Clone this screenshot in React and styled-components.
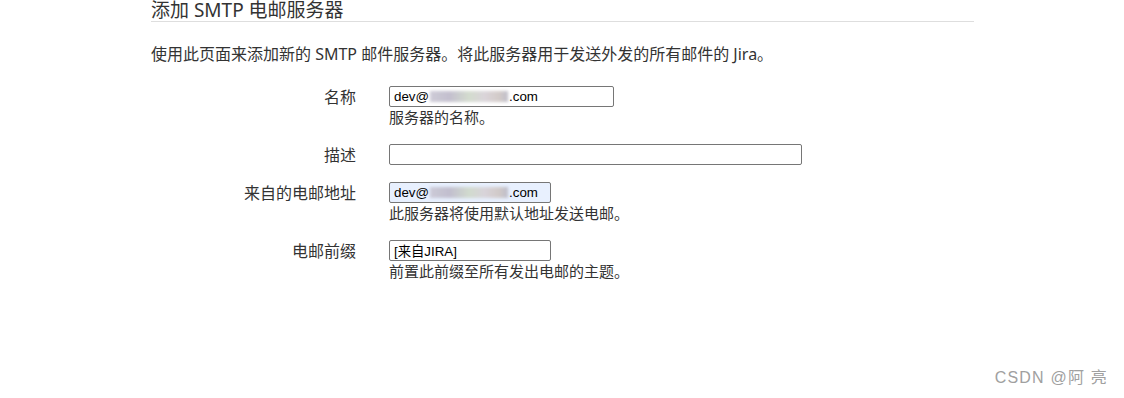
import React from "react";
import styled, { createGlobalStyle } from "styled-components";

const Global = createGlobalStyle`
  html, body { margin: 0; padding: 0; background: #fff; }
  body { font-family: "Noto Sans", "Noto Sans CJK SC", sans-serif; color: #333; }
`;

const Page = styled.div`
  position: relative;
  width: 1124px;
  height: 398px;
  overflow: hidden;
  padding-left: 151px;
  box-sizing: border-box;
`;

const Section = styled.div`
  width: 823px;
`;

const Heading = styled.h2`
  margin: 0;
  font-size: 19px;
  line-height: 20px;
  font-weight: 400;
  color: #333;
  padding-bottom: 1px;
  border-bottom: 1px solid #dedede;
`;

const Intro = styled.p`
  margin: 20px 0 0;
  font-size: 16px;
  line-height: 24px;
  color: #333;
`;

const Form = styled.div`
  margin-top: 20px;
  display: flex;
  flex-direction: column;
  gap: 16px;
`;

const Row = styled.div`
  display: grid;
  grid-template-columns: 205px 1fr;
  column-gap: 33px;
  align-items: start;
`;

const Label = styled.label`
  text-align: right;
  font-size: 16px;
  line-height: 21px;
  color: #333;
  padding-top: 1px;
`;

const Control = styled.div`
  display: flex;
  flex-direction: column;
  align-items: flex-start;
`;

const Field = styled.div`
  box-sizing: border-box;
  width: ${(p) => p.$w}px;
  height: 21px;
  border: 1px solid #767676;
  border-radius: 2px;
  background: ${(p) => (p.$filled ? "#e8f0fe" : "#fff")};
  padding: 0 0 0 4px;
  display: flex;
  align-items: center;
  font-family: "Liberation Sans", Arial, "Noto Sans CJK SC", sans-serif;
  font-size: 13.33px;
  color: #000;
  white-space: nowrap;
  overflow: hidden;
`;

const Blur = styled.span`
  display: inline-block;
  width: ${(p) => p.$w}px;
  height: 11px;
  margin: 0 1px 0 1px;
  background: linear-gradient(
    90deg,
    #c9c6d3 0%,
    #bdb9c9 25%,
    #cfd8c9 50%,
    #d6d0d6 70%,
    #cfc6c3 88%,
    #b9b7c4 100%
  );
  filter: blur(1.6px);
  opacity: 0.9;
`;

const Help = styled.div`
  font-size: 15px;
  line-height: 21px;
  color: #333;
`;

const Watermark = styled.div`
  position: absolute;
  right: 16px;
  bottom: 10px;
  font-family: "Liberation Sans", Arial, "Noto Sans CJK SC", sans-serif;
  font-size: 16px;
  line-height: 20px;
  color: #a0a0a0;
  letter-spacing: 1.2px;
  text-shadow: 0 0 1px #fff;
`;

function EmailValue({ blur }) {
  return (
    <>
      <span>dev@</span>
      <Blur $w={blur} />
      <span>.com</span>
    </>
  );
}

export default function App() {
  return (
    <>
      <Global />
      <Page>
        <Section>
          <Heading>添加 SMTP 电邮服务器</Heading>
          <Intro>
            使用此页面来添加新的 SMTP 邮件服务器。将此服务器用于发送外发的所有邮件的 Jira。
          </Intro>
          <Form>
            <Row>
              <Label>名称</Label>
              <Control>
                <Field $w={225}>
                  <EmailValue blur={78} />
                </Field>
                <Help>服务器的名称。</Help>
              </Control>
            </Row>
            <Row>
              <Label>描述</Label>
              <Control>
                <Field $w={413} />
              </Control>
            </Row>
            <Row>
              <Label>来自的电邮地址</Label>
              <Control>
                <Field $w={162} $filled>
                  <EmailValue blur={78} />
                </Field>
                <Help>此服务器将使用默认地址发送电邮。</Help>
              </Control>
            </Row>
            <Row>
              <Label>电邮前缀</Label>
              <Control>
                <Field $w={162}>[来自JIRA]</Field>
                <Help>前置此前缀至所有发出电邮的主题。</Help>
              </Control>
            </Row>
          </Form>
        </Section>
        <Watermark>CSDN @阿 亮</Watermark>
      </Page>
    </>
  );
}
